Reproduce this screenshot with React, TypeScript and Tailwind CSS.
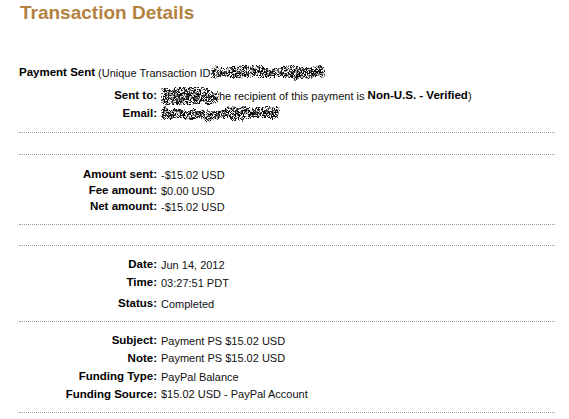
import { useMemo } from 'react';

function mulberry32(a: number) {
  return function () {
    a |= 0;
    a = (a + 0x6d2b79f5) | 0;
    let t = Math.imul(a ^ (a >>> 15), 1 | a);
    t = (t + Math.imul(t ^ (t >>> 7), 61 | t)) ^ t;
    return ((t ^ (t >>> 14)) >>> 0) / 4294967296;
  };
}

// scrubbed-out text, drawn as pixel noise
function Scribble({ w, h, seed }: { w: number; h: number; seed: number }) {
  const paths = useMemo(() => {
    const rnd = mulberry32(seed);
    const out = ['', '', '', ''];
    let top = 2;
    let bot = h - 2;
    for (let x = 0; x < w; x++) {
      top = Math.max(0, Math.min(h / 2 - 3, top + (rnd() - 0.5) * 3));
      bot = Math.min(h, Math.max(h / 2 + 3, bot + (rnd() - 0.5) * 3));
      const edge = x < 2 || x > w - 3;
      for (let y = Math.floor(top); y < Math.ceil(bot); y++) {
        const mid = Math.abs(y - h / 2) / (h / 2);
        const r = rnd();
        const k = (edge ? r + 0.3 : r) + mid * 0.15;
        let c = -1;
        if (k < 0.42) c = 0;
        else if (k < 0.6) c = 1;
        else if (k < 0.72) c = 2;
        else if (k < 0.82) c = 3;
        if (c >= 0) out[c] += `M${x} ${y}h1v1h-1z`;
      }
    }
    return out;
  }, [w, h, seed]);
  const colors = ['#0a0a0a', '#444', '#888', '#c8c8c8'];
  return (
    <svg width={w} height={h} viewBox={`0 0 ${w} ${h}`} className="inline-block align-middle shrink-0" shapeRendering="crispEdges">
      {paths.map((d, i) => (
        <path key={i} d={d} fill={colors[i]} />
      ))}
    </svg>
  );
}

function Row({ label, h = 'h-[16px]', mt = '', children }: { label: string; h?: string; mt?: string; children: React.ReactNode }) {
  return (
    <div className={`flex items-center ${h} ${mt}`}>
      <div className="w-[138px] shrink-0 text-right font-bold text-[11.5px] text-black">{label}</div>
      <div className="ml-[4px] flex items-center whitespace-nowrap text-[11px] text-[#111]">{children}</div>
    </div>
  );
}

function Dotted({ mt }: { mt: string }) {
  return <div className={`w-[536px] h-0 border-t border-dotted border-[#9a9a9a] ${mt}`} />;
}

export default function App() {
  return (
    <div className="w-[569px] h-[419px] overflow-hidden bg-white pl-[19px] leading-none" style={{ fontFamily: '"Liberation Sans", Arial, sans-serif' }}>
      <h1 className="h-[26px] leading-[26px] text-[19px] font-bold text-[#b5813f] pl-[1px]">Transaction Details</h1>

      <div className="flex items-center h-[18px] mt-[38px] whitespace-nowrap text-[11px] text-[#111]">
        <span className="font-bold text-[11.5px] text-black">Payment Sent</span>
        <span className="ml-[3px]">(Unique Transaction ID</span>
        <Scribble w={114} h={16} seed={7} />
      </div>

      <Row label="Sent to:" h="h-[18px]" mt="mt-[5px]">
        <Scribble w={58} h={18} seed={21} />
        <span>he recipient of this payment is&nbsp;</span>
        <span className="font-bold text-[11.5px] text-black">Non-U.S. - Verified</span>
        <span>)</span>
      </Row>
      <Row label="Email:" h="h-[18px]">
        <Scribble w={119} h={16} seed={42} />
      </Row>

      <Dotted mt="mt-[9px]" />
      <Dotted mt="mt-[21px]" />

      <Row label="Amount sent:" mt="mt-[12px]">-$15.02 USD</Row>
      <Row label="Fee amount:">$0.00 USD</Row>
      <Row label="Net amount:">-$15.02 USD</Row>

      <Dotted mt="mt-[9px]" />
      <Dotted mt="mt-[20px]" />

      <Row label="Date:" h="h-[18px]" mt="mt-[10px]">Jun 14, 2012</Row>
      <Row label="Time:" h="h-[18px]">03:27:51 PDT</Row>
      <Row label="Status:" h="h-[18px]" mt="mt-[3px]">Completed</Row>

      <Dotted mt="mt-[8px]" />

      <Row label="Subject:" h="h-[18px]" mt="mt-[10px]">Payment PS $15.02 USD</Row>
      <Row label="Note:" h="h-[17px]">Payment PS $15.02 USD</Row>
      <Row label="Funding Type:" h="h-[18px]" mt="mt-[1px]">PayPal Balance</Row>
      <Row label="Funding Source:" h="h-[17px]">$15.02 USD - PayPal Account</Row>

      <Dotted mt="mt-[9px]" />
    </div>
  );
}
